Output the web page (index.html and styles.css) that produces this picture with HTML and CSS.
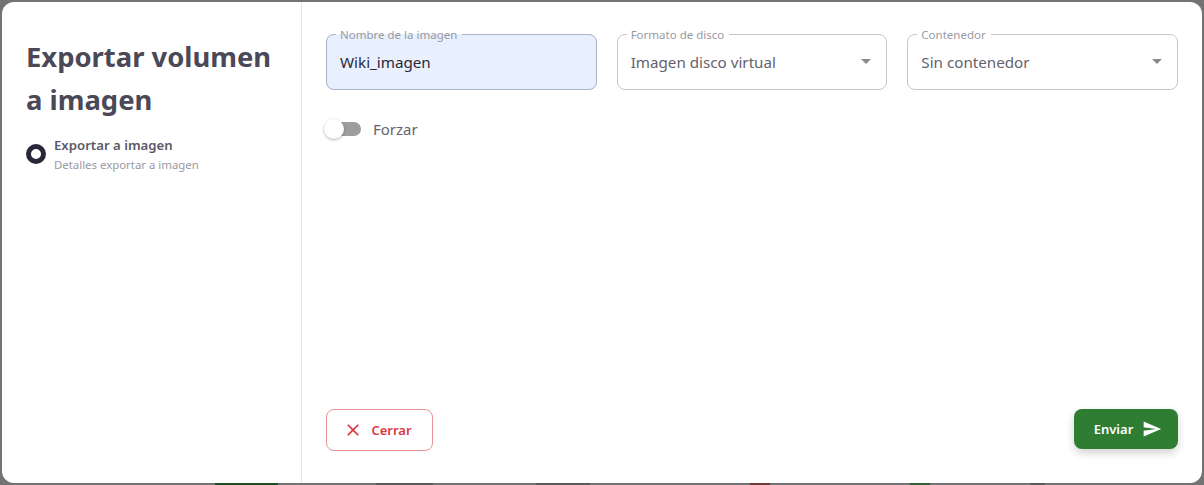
FILE: index.html
```html
<!DOCTYPE html>
<html lang="es">
<head>
<meta charset="utf-8">
<title>Exportar volumen a imagen</title>
<link rel="stylesheet" href="styles.css">
</head>
<body>
<div class="behind">
  <span class="frag frag-a"></span>
  <span class="frag frag-b"></span>
  <span class="frag frag-c"></span>
  <span class="frag frag-d"></span>
  <span class="frag frag-e"></span>
  <span class="frag frag-f"></span>
</div>
<div class="dialog">
  <aside class="side">
    <h2 class="title">Exportar volumen a imagen</h2>
    <div class="step">
      <span class="step-dot"></span>
      <div class="step-text">
        <div class="step-name">Exportar a imagen</div>
        <div class="step-desc">Detalles exportar a imagen</div>
      </div>
    </div>
  </aside>
  <main class="main">
    <div class="fields">
      <fieldset class="field filled">
        <legend>Nombre de la imagen</legend>
        <span class="value dark">Wiki_imagen</span>
      </fieldset>
      <fieldset class="field">
        <legend>Formato de disco</legend>
        <span class="value">Imagen disco virtual</span>
        <span class="caret"></span>
      </fieldset>
      <fieldset class="field">
        <legend>Contenedor</legend>
        <span class="value">Sin contenedor</span>
        <span class="caret"></span>
      </fieldset>
    </div>
    <div class="switch-row">
      <span class="switch"><span class="knob"></span></span>
      <span class="switch-label">Forzar</span>
    </div>
    <div class="actions">
      <button class="btn btn-close">
        <svg width="20" height="20" viewBox="0 0 24 24" fill="currentColor"><path d="M19 6.41 17.59 5 12 10.59 6.41 5 5 6.41 10.59 12 5 17.59 6.41 19 12 13.41 17.59 19 19 17.59 13.41 12z"/></svg>
        Cerrar
      </button>
      <button class="btn btn-send">
        Enviar
        <svg width="20" height="20" viewBox="0 0 24 24" fill="currentColor"><path d="M2.01 21 23 12 2.01 3 2 10l15 2-15 2z"/></svg>
      </button>
    </div>
  </main>
</div>
</body>
</html>
```
FILE: styles.css
```css
* { box-sizing: border-box; }
html, body { height: 100%; }
body {
  position: relative;
  margin: 0;
  padding: 2px;
  background: #737373;
  font-family: "Noto Sans", Inter, sans-serif;
  overflow: hidden;
}
.behind {
  position: absolute;
  left: 0;
  right: 0;
  bottom: 0;
  height: 2px;
  display: flex;
}
.frag { display: block; height: 2px; }
.frag-a { margin-left: 215px; width: 63px; background: #1d4d21; }
.frag-b { margin-left: 98px; width: 57px; background: #5a5a5a; }
.frag-c { margin-left: 103px; width: 54px; background: #5a5a5a; }
.frag-d { margin-left: 160px; width: 20px; background: #6f3a3a; }
.frag-e { margin-left: 140px; width: 20px; background: #33603a; }
.frag-f { margin-left: 100px; width: 15px; background: #5a5a5a; }
.dialog {
  position: relative;
  display: flex;
  height: 100%;
  background: #fff;
  border-radius: 12px;
  overflow: hidden;
}
.side {
  width: 300px;
  flex: none;
  padding: 24px;
  border-right: 1px solid #e6e6e6;
}
.title {
  margin: 9px 0 0;
  font-size: 27.4px;
  line-height: 43px;
  font-weight: 700;
  color: #4b4958;
}
.step {
  display: flex;
  align-items: center;
  gap: 8px;
  margin-top: 14px;
}
.step-dot {
  width: 20px;
  height: 20px;
  margin-bottom: 2px;
  border: 5px solid #2a2838;
  border-radius: 50%;
  flex: none;
}
.step-name {
  font-size: 13.2px;
  line-height: 20px;
  font-weight: 600;
  color: #5a5866;
}
.step-desc {
  font-size: 11.4px;
  line-height: 20px;
  color: #9a99a3;
}
.main {
  flex: 1;
  display: flex;
  flex-direction: column;
  padding: 23px 24px 32px 24px;
}
.fields {
  display: grid;
  grid-template-columns: repeat(3, 1fr);
  gap: 20px;
}
.field {
  margin: 0;
  height: 65px;
  padding: 0 13px 9px;
  display: flex;
  align-items: center;
  border: 1px solid #c6c6c9;
  border-radius: 8px;
  min-width: 0;
}
.field.filled {
  background: #e8f0fe;
  border-color: #a9b3c6;
}
.field legend {
  margin-left: -4px;
  padding: 2px 5px 0 4px;
  font-size: 11.5px;
  line-height: 16px;
  color: #9a99a3;
}
.value {
  font-size: 15.2px;
  color: #63626e;
}
.value.dark { color: #2a2838; }
.caret {
  margin-left: auto;
  margin-right: 2px;
  width: 0;
  height: 0;
  border-left: 5px solid transparent;
  border-right: 5px solid transparent;
  border-top: 5px solid #8a8992;
}
.switch-row {
  display: flex;
  align-items: center;
  gap: 12px;
  margin-top: 29px;
}
.switch {
  position: relative;
  display: block;
  width: 35px;
  height: 14px;
  border-radius: 7px;
  background: #9d9d9d;
}
.knob {
  position: absolute;
  left: -2px;
  top: -3px;
  width: 20px;
  height: 20px;
  border-radius: 50%;
  background: #fff;
  box-shadow: 0 1px 3px rgba(0,0,0,.3);
}
.switch-label {
  font-size: 15px;
  color: #63626e;
}
.actions {
  margin-top: auto;
  display: flex;
  justify-content: space-between;
  align-items: flex-start;
}
.btn {
  display: flex;
  align-items: center;
  justify-content: center;
  font-family: inherit;
  font-size: 13px;
  font-weight: 600;
  border-radius: 8px;
  cursor: pointer;
}
.btn-close {
  width: 107px;
  height: 42px;
  gap: 8px;
  padding: 0 6px 0 2px;
  background: #fff;
  color: #d9363e;
  border: 1px solid #ec9093;
}
.btn-send {
  width: 104px;
  height: 40px;
  gap: 9px;
  padding: 0 0 0 4px;
  background: #2e7d32;
  color: #fff;
  border: 0;
  box-shadow: 0 4px 8px rgba(0,0,0,.18);
}
```
